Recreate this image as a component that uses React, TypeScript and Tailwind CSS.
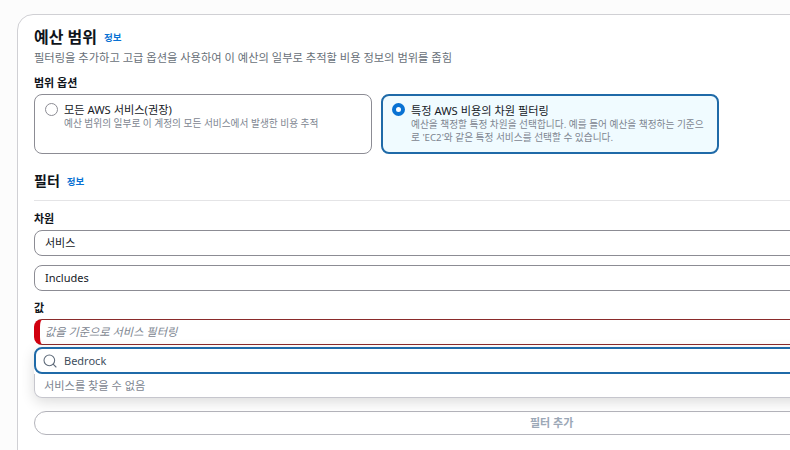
import { Search } from "lucide-react";

const font = { fontFamily: '"Noto Sans", "Noto Sans CJK KR", sans-serif' };

function InfoLink({ className }: { className?: string }) {
  return <span className={`text-[9.5px] font-bold text-[#0972d3] ${className ?? ""}`}>정보</span>;
}

function FieldBox({ children }: { children: React.ReactNode }) {
  return (
    <div className="flex items-center h-[26px] w-[900px] px-[10px] border border-[#8c8c94] rounded-lg bg-white text-[11px] text-[#16191f]">
      {children}
    </div>
  );
}

export default function App() {
  return (
    <div className="w-[790px] h-[450px] overflow-hidden bg-[#fcfcfc] pl-[17px] pt-[14px]" style={font}>
      <div className="w-[1000px] h-[500px] pl-4 pt-[10px] bg-white border border-[#d0d0d4] rounded-tl-2xl">
        <div className="flex items-center gap-[7px] h-[24px]">
          <h2 className="text-[16px] font-bold leading-6 text-[#0f141a]">예산 범위</h2>
          <InfoLink className="mt-[3px]" />
        </div>
        <p className="h-[18px] text-[11.25px] leading-[18px] text-[#687078]">
          필터링을 추가하고 고급 옵션을 사용하여 이 예산의 일부로 추적할 비용 정보의 범위를 좁힘
        </p>

        <div className="mt-[7px] h-[18px] text-[11px] font-bold leading-[18px] text-[#0f141a]">범위 옵션</div>
        <div className="flex gap-[9px] mt-[2px]">
          <div className="flex gap-[6px] w-[338px] h-[60px] pl-[10px] pt-[7px] border border-[#8c8c94] rounded-lg bg-white">
            <span className="mt-[1px] size-[13px] rounded-full border border-[#8c8c94] bg-white shrink-0" />
            <div>
              <div className="text-[11.2px] leading-[15px] text-[#16191f]">모든 AWS 서비스(권장)</div>
              <div className="text-[9.7px] leading-[13px] text-[#7d8590]">
                예산 범위의 일부로 이 계정의 모든 서비스에서 발생한 비용 추적
              </div>
            </div>
          </div>
          <div className="flex gap-[6px] w-[338px] h-[60px] pl-[9px] pt-[7px] border-2 border-[#1f6aa8] rounded-lg bg-[#f0fbff]">
            <span className="size-[13px] rounded-full border-[4px] border-[#0972d3] bg-white shrink-0" />
            <div>
              <div className="text-[11.2px] leading-[15px] text-[#16191f]">특정 AWS 비용의 차원 필터링</div>
              <div className="w-[296px] text-[9.7px] leading-[13px] text-[#7d8590]">
                예산을 책정할 특정 차원을 선택합니다. 예를 들어 예산을 책정하는 기준으로 'EC2'와 같은 특정 서비스를 선택할 수 있습니다.
              </div>
            </div>
          </div>
        </div>

        <div className="flex items-center gap-[7px] mt-[15px] h-[24px]">
          <h3 className="text-[14px] font-bold leading-6 text-[#0f141a]">필터</h3>
          <InfoLink className="mt-[2px]" />
        </div>
        <div className="mt-[7px] w-[900px] border-t border-[#e4e4e6]" />

        <div className="mt-[9px] h-[18px] text-[11px] font-bold leading-[18px] text-[#0f141a]">차원</div>
        <div className="mt-[2px]">
          <FieldBox>서비스</FieldBox>
        </div>
        <div className="mt-[9px]">
          <FieldBox>Includes</FieldBox>
        </div>

        <div className="mt-[8px] h-[18px] text-[11px] font-bold leading-[18px] text-[#0f141a]">값</div>
        <div className="mt-[2px] flex items-center h-[26px] w-[900px] pl-[5px] border border-[#8a2b2b] border-l-[6px] border-l-[#d1000f] rounded-lg bg-white text-[11.2px] italic text-[#7d8590]">
          값을 기준으로 서비스 필터링
        </div>

        <div className="relative mt-[2px] w-[900px] rounded-lg bg-white shadow-[0_4px_14px_rgba(0,0,0,0.14)]">
          <div className="flex items-center gap-[6px] h-[27px] pl-[6px] border-2 border-[#1f6aa8] rounded-lg bg-white text-[11px] text-[#414d5c]">
            <Search size={16} strokeWidth={1.6} className="text-[#5f6b7a]" />
            <span className="pt-[1px]">Bedrock</span>
          </div>
          <div className="flex items-center h-[24px] pl-[9px] pt-[2px] border border-t-0 border-[#c6c6cd] rounded-b-lg text-[11.2px] text-[#7d8590]">
            서비스를 찾을 수 없음
          </div>
        </div>

        <div className="mt-[13px] flex items-center h-[24px] w-[1036px] border border-[#b4b4bb] rounded-full bg-white">
          <span className="ml-[495px] text-[11px] font-bold text-[#9ba7b6]">필터 추가</span>
        </div>
      </div>
    </div>
  );
}
